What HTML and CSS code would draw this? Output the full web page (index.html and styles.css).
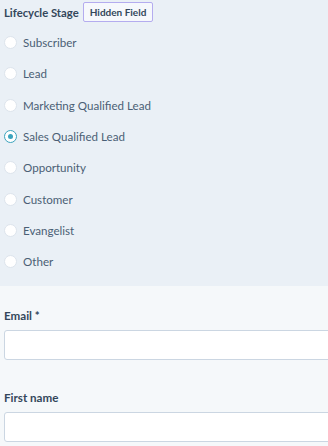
FILE: index.html
```html
<!DOCTYPE html>
<html>
<head>
<meta charset="utf-8">
<link rel="stylesheet" href="styles.css">
</head>
<body>
<div class="page">
  <section class="hidden-group">
    <div class="group-head">
      <span class="group-label">Lifecycle Stage</span>
      <span class="badge">Hidden Field</span>
    </div>
    <ul class="options">
      <li class="option"><span class="radio"></span><span class="opt-text">Subscriber</span></li>
      <li class="option"><span class="radio"></span><span class="opt-text">Lead</span></li>
      <li class="option"><span class="radio"></span><span class="opt-text">Marketing Qualified Lead</span></li>
      <li class="option"><span class="radio checked"></span><span class="opt-text">Sales Qualified Lead</span></li>
      <li class="option"><span class="radio"></span><span class="opt-text">Opportunity</span></li>
      <li class="option"><span class="radio"></span><span class="opt-text">Customer</span></li>
      <li class="option"><span class="radio"></span><span class="opt-text">Evangelist</span></li>
      <li class="option"><span class="radio"></span><span class="opt-text">Other</span></li>
    </ul>
  </section>
  <section class="fields">
    <div class="field">
      <label class="field-label">Email *</label>
      <div class="input"></div>
    </div>
    <div class="field">
      <label class="field-label">First name</label>
      <div class="input"></div>
    </div>
  </section>
</div>
</body>
</html>
```
FILE: styles.css
```css
html, body {
  margin: 0;
  padding: 0;
  background: #f5f8fa;
  overflow: hidden;
}
body {
  font-family: Lato, "Open Sans", sans-serif;
  color: #33475b;
  width: 328px;
  height: 446px;
}
.page {
  display: flex;
  flex-direction: column;
}
.hidden-group {
  background: #eaf0f6;
  padding: 2px 4px 8px 4px;
  display: flex;
  flex-direction: column;
}
.group-head {
  display: flex;
  align-items: center;
  gap: 4px;
  height: 20px;
  margin-bottom: 5px;
}
.group-label {
  font-size: 11.3px;
  font-weight: 700;
  color: #33475b;
}
.badge {
  box-sizing: border-box;
  display: inline-flex;
  align-items: center;
  height: 20px;
  padding: 0 6px;
  border: 1px solid #b4acef;
  background: #f6f8fc;
  border-radius: 2px;
  font-size: 10px;
  font-weight: 700;
  color: #33475b;
}
.options {
  list-style: none;
  margin: 0;
  padding: 0;
  display: flex;
  flex-direction: column;
}
.option {
  height: 31.33px;
  display: flex;
  align-items: center;
  gap: 6px;
}
.radio {
  box-sizing: border-box;
  width: 13px;
  height: 13px;
  border-radius: 50%;
  background: #fff;
  border: 1px solid #dde4ec;
  flex: none;
  display: flex;
  align-items: center;
  justify-content: center;
}
.radio.checked {
  border: 1.5px solid #3aa3bd;
}
.radio.checked::after {
  content: "";
  width: 5px;
  height: 5px;
  border-radius: 50%;
  background: #3aa3bd;
}
.opt-text {
  font-size: 11.6px;
  color: #4a5f75;
}
.fields {
  padding: 22px 0 0 4px;
  display: flex;
  flex-direction: column;
  gap: 30px;
}
.field {
  display: flex;
  flex-direction: column;
  gap: 6px;
}
.field-label {
  font-size: 11.6px;
  font-weight: 700;
  color: #33475b;
  line-height: 16px;
}
.input {
  box-sizing: border-box;
  width: 340px;
  height: 30px;
  background: #fff;
  border: 1px solid #cbd6e2;
  border-radius: 3px;
}
```
